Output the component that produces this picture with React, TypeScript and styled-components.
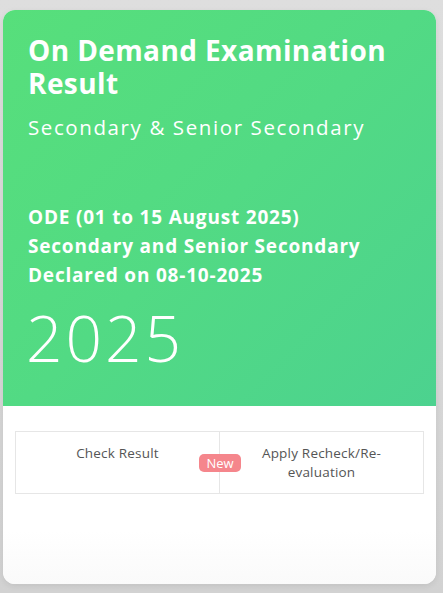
import React from "react";
import styled, { createGlobalStyle } from "styled-components";

const Global = createGlobalStyle`
  html, body { margin: 0; padding: 0; }
  body {
    background: #d5d5d5;
    font-family: "Open Sans", "DejaVu Sans", sans-serif;
  }
`;

const Page = styled.div`
  width: 443px;
  height: 593px;
  box-sizing: border-box;
  padding: 10px 7px 9px 3px;
  display: flex;
  background: linear-gradient(#dedede, #d2d2d2);
`;

const Card = styled.div`
  flex: 1;
  display: flex;
  flex-direction: column;
  border-radius: 12px;
  overflow: hidden;
  background: #ffffff;
  box-shadow: 0 2px 6px rgba(0, 0, 0, 0.08);
`;

const Hero = styled.div`
  height: 396px;
  box-sizing: border-box;
  padding: 24px 25px 0 25px;
  background: linear-gradient(135deg, #57df7b 0%, #52da84 50%, #4cd28f 100%);
  color: #ffffff;
  display: flex;
  flex-direction: column;
`;

const Title = styled.h1`
  margin: 0;
  font-size: 28px;
  line-height: 33px;
  font-weight: 700;
  letter-spacing: 0.4px;
`;

const Subtitle = styled.div`
  margin-top: 14px;
  font-size: 20.5px;
  line-height: 26px;
  font-weight: 400;
  letter-spacing: 1.6px;
`;

const Notice = styled.div`
  margin-top: 63px;
  font-size: 19px;
  line-height: 29px;
  font-weight: 700;
  letter-spacing: 0.8px;
`;

const Year = styled.div`
  margin-top: 12px;
  font-size: 64px;
  line-height: 72px;
  font-weight: 300;
  letter-spacing: 3px;
  margin-left: -2px;
`;

const Footer = styled.div`
  flex: 1;
  padding: 25px 12px 0 12px;
  background: linear-gradient(#ffffff 0%, #ffffff 70%, #fafafa 100%);
`;

const Actions = styled.div`
  display: grid;
  grid-template-columns: 203px 1fr;
  border: 1px solid #e6e6e6;
`;

const Action = styled.a<{ $divider?: boolean }>`
  position: relative;
  display: block;
  min-height: 61px;
  box-sizing: border-box;
  padding: 12px 28px 10px;
  text-align: center;
  font-size: 13.5px;
  line-height: 19px;
  font-weight: 500;
  letter-spacing: 0.2px;
  color: #555555;
  text-decoration: none;
  border-left: ${(p) => (p.$divider ? "1px solid #e6e6e6" : "none")};
`;

const Badge = styled.span`
  position: absolute;
  left: -21px;
  top: 22px;
  width: 42px;
  height: 18px;
  border-radius: 5px;
  background: #f5868c;
  color: #ffffff;
  font-size: 13px;
  line-height: 18px;
  text-align: center;
  font-weight: 400;
  letter-spacing: 0;
`;

export default function App() {
  return (
    <>
      <Global />
      <Page>
        <Card>
          <Hero>
            <Title>
              On Demand Examination
              <br />
              Result
            </Title>
            <Subtitle>Secondary &amp; Senior Secondary</Subtitle>
            <Notice>
              ODE (01 to 15 August 2025)
              <br />
              Secondary and Senior Secondary
              <br />
              Declared on 08-10-2025
            </Notice>
            <Year>2025</Year>
          </Hero>
          <Footer>
            <Actions>
              <Action href="#">Check Result</Action>
              <Action href="#" $divider>
                <Badge>New</Badge>
                Apply Recheck/Re-
                <br />
                evaluation
              </Action>
            </Actions>
          </Footer>
        </Card>
      </Page>
    </>
  );
}
